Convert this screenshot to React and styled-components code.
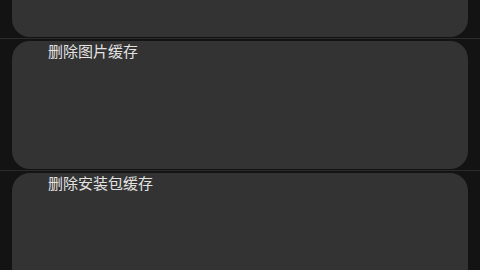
import React from "react";
import styled, { createGlobalStyle } from "styled-components";

const GlobalStyle = createGlobalStyle`
  html, body {
    margin: 0;
    padding: 0;
    background: #131313;
    overflow: hidden;
  }
  body {
    font-family: "Noto Sans", "Noto Sans CJK SC", sans-serif;
  }
`;

const List = styled.div`
  display: flex;
  flex-direction: column;
  margin-top: -93px;
`;

const Row = styled.div`
  padding: 2px 12px 1px;
  border-bottom: 1px solid #2b2b2b;
`;

const Card = styled.div`
  height: 128px;
  background: #333333;
  border-radius: 18px;
  padding: 0 36px;
  box-sizing: border-box;
`;

const Title = styled.div`
  font-family: "Noto Sans CJK SC", sans-serif;
  font-size: 15px;
  line-height: 20px;
  color: #e2e2e2;
`;

const items = ["", "删除图片缓存", "删除安装包缓存"];

export default function App() {
  return (
    <>
      <GlobalStyle />
      <List>
        {items.map((label, i) => (
          <Row key={i}>
            <Card>{label && <Title>{label}</Title>}</Card>
          </Row>
        ))}
      </List>
    </>
  );
}
